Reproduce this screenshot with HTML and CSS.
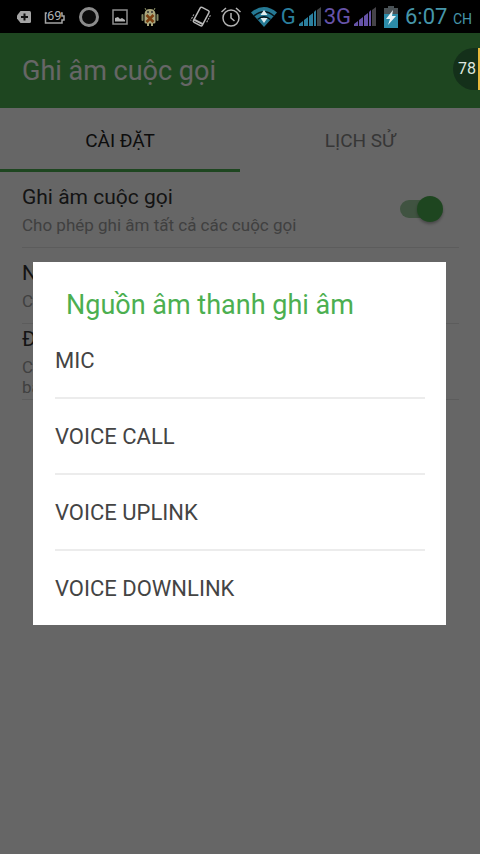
FILE: index.html
```html
<!DOCTYPE html>
<html lang="vi">
<head>
<meta charset="utf-8">
<meta name="viewport" content="width=device-width, initial-scale=1">
<title>Ghi âm cuộc gọi</title>
<link rel="stylesheet" href="styles.css">
</head>
<body>
<div class="status">
  <div class="status-group status-left">
    <svg width="16" height="14" viewBox="0 0 16 14"><path d="M4.500 1H13.500Q15 1 15 2.500V11.500Q15 13 13.500 13H4.500L1 8.500V5.500Z" fill="#a4a4a4"/><path d="M8.500 3.500V10.500M5 7H12" stroke="#111" stroke-width="2"/></svg>
    <svg width="22" height="24" viewBox="0 0 22 24"><path d="M3 8H1.500V18H18V15H20V11H18V8H17" fill="none" stroke="#a4a4a4" stroke-width="1.500"/><text x="3" y="15" class="battery-text">69</text></svg>
    <svg width="22" height="22" viewBox="0 0 22 22"><circle cx="11" cy="11" r="8.500" fill="#0c0c0c" stroke="#8c8c8c" stroke-width="3"/></svg>
    <svg width="16" height="16" viewBox="0 0 16 16"><rect x="1" y="1" width="14" height="14" fill="none" stroke="#8c8c8c" stroke-width="1.500"/><path d="M3 12.500V9L6 8L8 10L10 9L13 11V12.500Z" fill="#b4b4b4"/></svg>
    <svg width="20" height="20" viewBox="0 0 20 20"><path d="M6 3L5 1M14 3L15 1" stroke="#8b9066"/><path d="M4.500 7Q5 2 10 2T15.500 7V15Q15.500 16.500 14 16.500H13V19H11V16.500H9V19H7V16.500H6Q4.500 16.500 4.500 15Z" fill="#a9a67c"/><path d="M2.500 8V13M17.500 8V13" stroke="#7f8562" stroke-width="2" stroke-linecap="round"/><path d="M6.500 8L13.500 15M13.500 8L6.500 15" stroke="#7c3f10" stroke-width="2.500"/><circle cx="8" cy="5" r="1" fill="#333"/><circle cx="12" cy="5" r="1" fill="#333"/></svg>
  </div>
  <div class="status-group status-right">
    <div class="status-group status-modes">
      <svg width="22" height="24" viewBox="0 0 22 24"><g transform="rotate(28 11 12)" fill="none" stroke="#b8b8b8"><rect x="6" y="3" width="10" height="17" rx="1.500" stroke-width="1.500"/><path d="M6 17.500H16" stroke-width="2"/><path d="M3.500 13V20M18.500 6V14" stroke-dasharray="2 1"/></g></svg>
      <svg width="22" height="22" viewBox="0 0 22 22" fill="none" stroke="#b4b4b4" stroke-width="1.500"><circle cx="11" cy="12" r="8"/><path d="M11 7V12L14.500 15M1.500 6L6 2M20.500 6L16 2"/></svg>
      <svg width="28" height="22" viewBox="0 0 28 22"><path d="M1 6.500Q14-4.500 27 6.500L14 21Z" fill="#257994"/><path d="M4 10Q14 1.500 24 10M7.500 13.500Q14 8 20.500 13.500" fill="none" stroke="#06151b" stroke-width="1.500"/><path d="M14 4L17.500 9H10.500ZM14 17L17.500 12H10.500Z" fill="#e0eef0"/></svg>
    </div>
    <span class="net net-blue">G</span>
    <svg width="22" height="20" viewBox="1 0 22 20"><path d="M1 19V17L5 14V19ZM6 19V13L10 10V19ZM11 19V9L15 6V19ZM16 19V5L18 3V19Z" fill="#2b7f9e"/><path d="M19 19V3L23 0V19Z" fill="#404446"/></svg>
    <span class="net net-violet">3G</span>
    <svg width="22" height="20" viewBox="1 0 22 20"><path d="M1 19V17L5 14V19ZM6 19V13L10 10V19ZM11 19V9L15 6V19ZM16 19V5L18 3V19Z" fill="#6653a8"/><path d="M19 19V3L23 0V19Z" fill="#454348"/></svg>
    <svg class="charge" width="16" height="22" viewBox="0 0 16 22"><path d="M5 0H11V2H15V22H1V2H5Z" fill="#4a5256"/><path d="M1 8H15V22H1Z" fill="#2c8ca9"/><path d="M10 4L3 13H7L5 19L13 10H9Z" fill="#e8f2f4"/></svg>
    <span class="clock">6:07 <small>CH</small></span>
  </div>
</div>
<div class="screen">
  <header class="appbar"><h1>Ghi âm cuộc gọi</h1></header>
  <nav class="tabs">
    <button class="tab tab-active" type="button">CÀI ĐẶT</button>
    <button class="tab" type="button">LỊCH SỬ</button>
  </nav>
  <main class="settings">
    <div class="setting">
      <label class="setting-copy" for="record"><span class="name">Ghi âm cuộc gọi</span><span class="hint">Cho phép ghi âm tất cả các cuộc gọi</span></label>
      <input class="switch" id="record" type="checkbox" role="switch" checked>
    </div>
    <div class="setting"><div class="setting-copy"><span class="name">N</span><span class="hint">C</span></div></div>
    <div class="setting"><div class="setting-copy"><span class="name">Đ</span><span class="hint">C<br>ba</span></div></div>
  </main>
  <div class="scrim">
    <section class="dialog" role="dialog" aria-labelledby="source">
      <h2 id="source">Nguồn âm thanh ghi âm</h2>
      <ul class="options">
        <li><button type="button">MIC</button></li>
        <li><button type="button">VOICE CALL</button></li>
        <li><button type="button">VOICE UPLINK</button></li>
        <li><button type="button">VOICE DOWNLINK</button></li>
      </ul>
    </section>
  </div>
  <div class="bubble">78</div>
</div>
</body>
</html>
```
FILE: styles.css
```css
* { box-sizing: border-box; }
body {
  margin: 0;
  min-height: 100vh;
  display: flex;
  flex-direction: column;
  font-family: Roboto, "Noto Sans", sans-serif;
  background: #fff;
}
button {
  padding: 0;
  border: 0;
  background: none;
  font: inherit;
  color: inherit;
}
svg { display: block; flex: none; }

.status {
  height: 33px;
  padding: 0 8px 0 16px;
  display: flex;
  align-items: center;
  justify-content: space-between;
  background: #000;
}
.status-group { display: flex; align-items: center; }
.status-left { gap: 12px; }
.status-right { gap: 3px; }
.status-modes { gap: 8px; }
.battery-text { font-size: 13px; fill: #b0b0b0; }
.net { font-size: 22px; line-height: 32px; }
.net-blue { color: #2b7f9e; }
.net-violet { color: #6653a8; }
.charge { margin: 0 3px 0 4px; }
.clock { padding-top: 2px; font-size: 22px; line-height: 32px; color: #4696aa; white-space: nowrap; }
.clock small { font-size: 14px; }

.screen { position: relative; flex: 1; }
.appbar {
  height: 75px;
  padding: 0 22px;
  display: flex;
  align-items: center;
  background: #4caf50;
}
h1, h2 { margin: 0; font-weight: 400; font-size: 27px; line-height: 36px; }
h1 { color: #fff; }
.tabs { display: flex; height: 64px; }
.tab { position: relative; flex: 1; font-size: 19px; color: #888; }
.tab-active { color: #222; }
.tab-active::after {
  content: "";
  position: absolute;
  left: 0;
  right: 0;
  bottom: 0;
  height: 3px;
  background: #4caf50;
}
.settings { padding: 0 21px 0 22px; }
.setting {
  min-height: 76px;
  padding-bottom: 2px;
  display: flex;
  align-items: center;
  justify-content: space-between;
  border-bottom: 1px solid #e6e6e6;
}
.setting-copy { display: flex; flex-direction: column; gap: 3px; }
.name { font-size: 21px; line-height: 30px; color: #333; }
.hint { font-size: 17px; line-height: 20px; color: #a0a0a0; }
.switch {
  appearance: none;
  position: relative;
  width: 38px;
  height: 18px;
  margin: 0 21px 0 0;
  border-radius: 9px;
  background: #a0d0a2;
}
.switch::after {
  content: "";
  position: absolute;
  right: -5px;
  top: -4px;
  width: 26px;
  height: 26px;
  border-radius: 50%;
  background: #4caf50;
  box-shadow: 0 2px 3px rgba(0, 0, 0, .3);
}

.scrim {
  position: absolute;
  inset: 0;
  padding: 0 34px 0 33px;
  display: flex;
  align-items: center;
  background: rgba(0, 0, 0, .6);
}
.dialog { flex: 1; padding: 25px 21px 0 22px; background: #fff; }
h2 { padding: 0 11px; color: #4caf50; }
.options { margin: 0; padding: 0; list-style: none; }
.options li { border-bottom: 2px solid #ececec; }
.options li:last-child { border-bottom: 0; }
.options button {
  width: 100%;
  height: 74px;
  text-align: left;
  font-size: 22px;
  color: #444;
}
.bubble {
  position: absolute;
  right: 0;
  top: 15px;
  width: 27px;
  height: 42px;
  padding-left: 5px;
  border-right: 2px solid #e8b93c;
  border-radius: 21px 0 0 21px;
  background: #14301a;
  color: #dfe6df;
  font-size: 16px;
  line-height: 42px;
}
```
